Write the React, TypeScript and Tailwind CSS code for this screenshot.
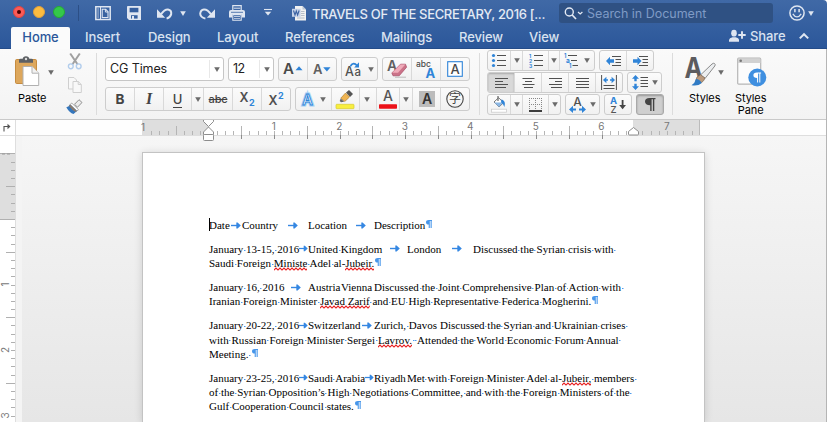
import React, { Fragment, type ReactNode } from "react";

const UI = "font-['Inter','Liberation_Sans',sans-serif]";
const FONT = "Inter, 'Liberation Sans', sans-serif";
const BLUE = "#2f84d8";

function Caret({ className = "", fill = "#6a6a6a" }: { className?: string; fill?: string }) {
  return (
    <svg width="6" height="5" viewBox="0 0 6 5" className={`shrink-0 ${className}`}>
      <path d="M0.2 0.3H5.8L3 4.9Z" fill={fill} />
    </svg>
  );
}

function Group({ className = "", children }: { className?: string; children: ReactNode }) {
  return (
    <div className={`flex shrink-0 overflow-hidden rounded-[3px] border border-[#cdcdcd] bg-linear-to-b from-[#fbfbfb] to-[#f1f1f1] ${className}`}>
      {children}
    </div>
  );
}

function Cell({ className = "", last = false, children }: { className?: string; last?: boolean; children: ReactNode }) {
  return (
    <div className={`flex shrink-0 items-center justify-center ${last ? "" : "border-r border-[#d9d9d9]"} ${className}`}>
      {children}
    </div>
  );
}

function Icon({ w, h, className = "", children }: { w: number; h: number; className?: string; children: ReactNode }) {
  return (
    <svg width={w} height={h} viewBox={`0 0 ${w} ${h}`} fill="none" className={`shrink-0 overflow-visible ${className}`} fontFamily={FONT}>
      {children}
    </svg>
  );
}

/* ---------- Title bar ---------- */

function TitleBar() {
  return (
    <div className="flex h-[27px] items-start">
      <div className="mt-[6px] ml-[13px] flex gap-2">
        <div className="flex size-3 items-center justify-center rounded-full border border-[#e0443e] bg-[#fc5b57]">
          <div className="size-1 rounded-full bg-[#4d0000]" />
        </div>
        <div className="size-3 rounded-full border border-[#e2a13a] bg-[#fdbc40]" />
        <div className="size-3 rounded-full border border-[#27a935] bg-[#34c84a]" />
      </div>
      <div className="mt-[5px] ml-[13px] h-[16px] w-px bg-[#2c4f86]" />
      <Icon w={16} h={15} className="mt-[6px] ml-[16px]">
        <path d="M0.8 0.8H15.2V13.4H0.8Z" stroke="#dfe6f1" strokeWidth="1.5" />
        <path d="M5.5 1V13.5" stroke="#dfe6f1" strokeWidth="1" />
        <path d="M3.1 2.5V12" stroke="#dfe6f1" strokeWidth="1.3" strokeDasharray="1 1" />
        <path d="M7.2 3.3H10.7L13 5.7V11.5H7.2Z" fill="#3a63a0" stroke="#dfe6f1" strokeWidth="1.1" />
        <path d="M10.4 3V6H13.3" stroke="#dfe6f1" strokeWidth="1" />
      </Icon>
      <Icon w={14} h={14} className="mt-[6px] ml-[16px]">
        <path d="M0.8 0H13.2Q14 0 14 0.8V14H2L0 12V0.8Q0 0 0.8 0Z" fill="#dfe6f1" />
        <path d="M2.6 1.8H11.4V6.3H2.6Z" fill="#355f9f" />
        <path d="M4 9.2H10.6V12.6H4Z" fill="#355f9f" />
        <path d="M5 10H7V13H5Z" fill="#dfe6f1" />
      </Icon>
      <Icon w={16} h={13} className="mt-[8px] ml-[16px]">
        <path d="M4 6.2Q7.5 1.2 11 1.4Q14.7 2 14.2 6Q13.6 9.2 9.6 10.6" stroke="#dfe6f1" strokeWidth="2" />
        <path d="M0 1.2V9.8H8.2Z" fill="#dfe6f1" />
      </Icon>
      <Caret className="mt-[11px] ml-[7px]" fill="#dfe6f1" />
      <Icon w={16} h={13} className="mt-[8px] ml-[13px]">
        <path d="M6.4 10.6Q1.4 9.4 1.2 5.8Q1.5 1.8 5 1.4Q8.5 1.2 12 6.2" stroke="#dfe6f1" strokeWidth="2" />
        <path d="M16 1.2V9.8H7.8Z" fill="#dfe6f1" />
      </Icon>
      <Icon w={16} h={16} className="mt-[5px] ml-[14px]">
        <path d="M3.8 5V0.7H12.2V5" stroke="#dfe6f1" strokeWidth="1.2" />
        <path d="M4.8 3.2H11.2" stroke="#dfe6f1" />
        <path d="M2 5H14Q16 5 16 7V12.5H12.8V9.5H3.2V12.5H0V7Q0 5 2 5Z" fill="#dfe6f1" />
        <path d="M2 7.3H14" stroke="#355f9f" strokeWidth="0.8" />
        <path d="M3.8 9.6H12.2V15.3H3.8Z" fill="#355f9f" stroke="#dfe6f1" strokeWidth="1.1" />
        <path d="M5 11.5H11M5 13.4H11" stroke="#dfe6f1" strokeWidth="0.8" />
      </Icon>
      <Icon w={8} h={7} className="mt-[9px] ml-[19px]">
        <path d="M0 0.5H8" stroke="#dfe6f1" strokeWidth="1.1" />
        <path d="M0.8 2.8H7.2L4 6.6Z" fill="#dfe6f1" />
      </Icon>
      <Icon w={15} h={15} className="mt-[6px] ml-[20px]">
        <path d="M3 0H10.5L14 3.5V14.5H3Z" fill="#f2f2f2" />
        <path d="M10.5 0V3.5H14Z" fill="#bcc6d4" />
        <path d="M9 5.5H12.5M9 7.5H12.5M9 9.5H12.5M5 12H12.5" stroke="#9fa9b8" strokeWidth="0.7" />
        <rect y="2.8" width="8.6" height="8" fill="#c5d2e8" />
        <path d="M1.5 4.5L3 9L4.3 5L5.6 9L7.1 4.5" stroke="#3b62a3" strokeWidth="1.1" />
      </Icon>
      <div className="mt-[4px] ml-[5px] w-[247px] text-[13px] leading-[20px] font-medium tracking-[-0.33px] whitespace-nowrap text-[#e4eaf4]">
        TRAVELS OF THE SECRETARY, 2016 [...
      </div>
      <div className="mt-[3px] flex h-[20px] w-[214px] items-center rounded-[3px] bg-[#2f5183]">
        <Icon w={19} h={13} className="ml-[5px]">
          <circle cx="5.3" cy="5" r="4" stroke="#e4eaf4" strokeWidth="1.4" />
          <path d="M8.2 8L12 12" stroke="#e4eaf4" strokeWidth="1.7" />
          <path d="M14 5L16.2 7L18.4 5" stroke="#e4eaf4" strokeWidth="1.2" />
        </Icon>
        <span className="mt-[2px] ml-[4px] text-[12.5px] tracking-[-0.02px] whitespace-nowrap text-[#7f9bc6]">Search in Document</span>
      </div>
      <Icon w={17} h={17} className="mt-[5px] ml-[16px]">
        <circle cx="8" cy="8" r="7.1" stroke="#dfe6f1" strokeWidth="1.5" />
        <path d="M5.9 4V7.2M10.1 4V7.2" stroke="#dfe6f1" strokeWidth="1.5" />
        <path d="M3.8 8.8Q8 15 12.2 8.8" stroke="#dfe6f1" strokeWidth="1.3" />
      </Icon>
      <Caret className="mt-[11px] ml-[2px]" fill="#dfe6f1" />
    </div>
  );
}

const tabs = [
  { name: "Insert", w: "w-[63px]" },
  { name: "Design", w: "w-[69px]" },
  { name: "Layout", w: "w-[68px]" },
  { name: "References", w: "w-[96px]" },
  { name: "Mailings", w: "w-[78px]" },
  { name: "Review", w: "w-[70px]" },
  { name: "View", w: "w-[200px]" },
];

function TabBar() {
  return (
    <div className="flex h-[22px] text-[13px] leading-[21px] font-medium tracking-[-0.1px] text-[#d9e2f0]">
      <div className="mr-[15px] ml-[11px] w-[59px] rounded-t-[2px] bg-[#fbfbfb] text-center text-[#2b579a]">Home</div>
      {tabs.map((t) => (
        <div key={t.name} className={`shrink-0 ${t.w}`}>{t.name}</div>
      ))}
      <Icon w={17} h={12} className="mt-[3px]">
        <ellipse cx="5" cy="3.2" rx="2.8" ry="3.4" fill="#dfe6f1" />
        <path d="M0 11.7V10Q0.3 7.8 3.5 7.2H6.6Q9.8 7.8 10 10V11.7Z" fill="#dfe6f1" />
        <path d="M13 1.3V8.7M9.3 5H16.7" stroke="#dfe6f1" strokeWidth="1.9" />
      </Icon>
      <span className="ml-[4px] w-[49px] leading-[19px]">Share</span>
      <Icon w={10} h={6} className="mt-[6px]">
        <path d="M0.8 5.4L5 1.2L9.2 5.4" stroke="#dfe6f1" strokeWidth="2" />
      </Icon>
    </div>
  );
}

/* ---------- Ribbon ---------- */

function ClipboardSection() {
  return (
    <div className="flex w-[97px] shrink-0 border-r border-[#dcdcdc]">
      <div className="ml-[15px] flex w-[34px] flex-col items-start">
        <Icon w={25} h={31} className="mt-[3px]">
          <rect x="0.5" y="3.5" width="21" height="24" rx="1.2" fill="#dda75c" stroke="#c68c40" />
          <path d="M4 6.8V4Q4 2.8 5.5 2.8H7.7Q8 0.3 11 0.3Q14 0.3 14.3 2.8H16.5Q18 2.8 18 4V6.8Z" fill="#5d6064" />
          <circle cx="11" cy="3" r="1.2" fill="#ddd" />
          <path d="M8 10.5H17L23.7 17.2V29.5H8Z" fill="#fff" stroke="#b1b1b1" />
          <path d="M17 10.5V17.2H23.7" fill="#f2f2f2" stroke="#b1b1b1" />
        </Icon>
        <div className="mt-[5px] ml-[3px] text-[11px] leading-[13px] tracking-[-0.1px] text-black">Paste</div>
      </div>
      <Caret className="mt-[17px] -ml-[1px]" />
      <div className="ml-[12px] flex flex-col items-center">
        <Icon w={16} h={17}>
          <path d="M3.2 0.5L10.7 11.5M12.8 0.5L5.3 11.5" stroke="#a0a0a0" strokeWidth="2" />
          <circle cx="3.8" cy="13.3" r="2.4" stroke="#b2cdec" strokeWidth="1.4" />
          <circle cx="11.7" cy="13.3" r="2.4" stroke="#b2cdec" strokeWidth="1.4" />
        </Icon>
        <Icon w={14} h={17} className="mt-[7px]">
          <path d="M0.5 0.5H6L8.5 3V12H0.5Z" fill="#f8f8f8" stroke="#cfcfcf" />
          <path d="M5 4.5H10.2L13.3 7.5V15.5H5Z" fill="#f8f8f8" stroke="#cfcfcf" />
          <path d="M10.2 4.5V7.5H13.3" stroke="#cfcfcf" />
        </Icon>
        <Icon w={17} h={15} className="mt-[5px]">
          <path d="M13 0.7L16 3.5L11.5 8.2L8.5 5.3Z" fill="#ececec" stroke="#777" strokeWidth="0.8" />
          <path d="M5.7 4L12.5 10.7L10.8 12L4.2 5.5Z" fill="#fff" stroke="#888" strokeWidth="0.7" />
          <path d="M4 5.5L11 12.1L7.5 15Q3.5 14 0.3 8.3Q2.5 8 4 5.5Z" fill="#3476bd" />
          <path d="M4 5.5L10.8 12L9.8 12.9Q6 11.2 3 6.9Z" fill="#8c7b6c" />
        </Icon>
      </div>
    </div>
  );
}

function FontSection() {
  return (
    <div className="flex w-[383px] shrink-0 flex-col border-r border-[#dcdcdc] pt-[4px] pl-[8px]">
      <div className="flex h-[24px] gap-1">
        <div className="flex w-[119px] shrink-0 items-center rounded-[3px] border border-[#c6c6c6] bg-white">
          <span className="ml-[4px] flex-1 text-[12.5px] tracking-[-0.1px] text-[#222]">CG Times</span>
          <div className="flex h-[18px] w-[14px] items-center justify-center border-l border-[#e8e8e8]"><Caret /></div>
        </div>
        <div className="flex w-[46px] shrink-0 items-center rounded-[3px] border border-[#c6c6c6] bg-white">
          <span className="ml-[4px] flex-1 text-[12.5px] tracking-[-0.5px] text-[#222]">12</span>
          <div className="flex h-[18px] w-[14px] items-center justify-center border-l border-[#e8e8e8]"><Caret /></div>
        </div>
        <Group className="w-[59px]">
          <Cell className="w-[29px]">
            <Icon w={20} h={14}>
              <text x="0" y="12.2" fontSize="15" fontWeight="600" fill="#4a4a4a">A</text>
              <path d="M12.5 8.3L16 4.2L19.5 8.3Z" fill={BLUE} />
            </Icon>
          </Cell>
          <Cell className="w-[28px]" last>
            <Icon w={18} h={14}>
              <text x="0" y="12.2" fontSize="13" fontWeight="600" fill="#606060">A</text>
              <path d="M10.2 5.2H17.5L13.9 9.5Z" fill={BLUE} />
            </Icon>
          </Cell>
        </Group>
        <Group className="w-[37px]">
          <Cell className="w-[35px] gap-[6px]" last>
            <Icon w={17} h={15}>
              <text x="0" y="13.7" fontSize="12.5" fontWeight="500" fill="#505050">A</text>
              <text x="9.5" y="13.7" fontSize="11.5" fontWeight="500" fill="#505050">a</text>
              <path d="M5.5 4Q8.5 -0.6 12 3.5" stroke={BLUE} strokeWidth="1.8" />
              <path d="M14 0.3V5.5H9.2Z" fill={BLUE} />
            </Icon>
            <Caret />
          </Cell>
        </Group>
        <Group className="w-[88px]">
          <Cell className="w-[29px]">
            <Icon w={20} h={19}>
              <text x="0" y="11" fontSize="14" fontWeight="600" fill="#606060">A</text>
              <path d="M13.5 4.2H18.5L19.6 7.2L12.2 15.8H6L4.8 13Z" fill="#cb7288" stroke="#a64b65" strokeWidth="0.7" />
              <path d="M13.5 4.4H18.3L11 12.8H5.2Z" fill="#efabb9" />
              <path d="M8 17.2H19" stroke="#bbb" />
            </Icon>
          </Cell>
          <Cell className="w-[29px]">
            <Icon w={20} h={20}>
              <text x="0" y="8.2" fontSize="8.5" fontWeight="500" fill="#4c4c4c">abc</text>
              <text x="9.4" y="19" fontSize="13" fontWeight="700" fill={BLUE}>A</text>
            </Icon>
          </Cell>
          <Cell className="w-[28px]" last>
            <Icon w={16} h={16}>
              <rect x="0.7" y="0.7" width="14.6" height="14.6" fill="#fff" stroke={BLUE} strokeWidth="1.1" />
              <text x="8" y="12.8" fontSize="13" fontWeight="500" fill="#484848" textAnchor="middle">A</text>
            </Icon>
          </Cell>
        </Group>
      </div>
      <div className="mt-[6px] flex h-[24px] gap-1">
        <Group className="w-[186px]">
          <Cell className="w-[29px]"><span className="text-[13.5px] font-bold text-[#444]">B</span></Cell>
          <Cell className="w-[29px]"><span className="font-['Liberation_Serif',serif] text-[16px] font-bold text-[#444] italic">I</span></Cell>
          <Cell className="w-[28px]">
            <span className="h-[17px] border-b border-[#444] text-[13px] leading-[17px] font-medium text-[#444]">U</span>
          </Cell>
          <Cell className="w-[12px]"><Caret /></Cell>
          <Cell className="w-[29px]"><span className="text-[11px] tracking-[-0.2px] font-medium text-[#444] line-through">abc</span></Cell>
          <Cell className="w-[29px]">
            <Icon w={16} h={16}>
              <text x="0.5" y="11" fontSize="12.5" fontWeight="600" fill="#505050">X</text>
              <text x="10" y="15" fontSize="9" fontWeight="700" fill={BLUE}>2</text>
            </Icon>
          </Cell>
          <Cell className="w-[28px]" last>
            <Icon w={16} h={16}>
              <text x="0.5" y="13.5" fontSize="12.5" fontWeight="600" fill="#505050">X</text>
              <text x="10" y="8.2" fontSize="9" fontWeight="700" fill={BLUE}>2</text>
            </Icon>
          </Cell>
        </Group>
        <Group className="w-[175px]">
          <Cell className="w-[36px] gap-[6px]">
            <Icon w={13} h={17}>
              <text x="6.5" y="13.7" fontSize="14.5" fontWeight="600" fill="#fff" stroke="#a6d0f5" strokeWidth="3" textAnchor="middle">A</text>
              <text x="6.5" y="13.7" fontSize="14.5" fontWeight="600" fill="#fff" stroke={BLUE} strokeWidth="0.9" textAnchor="middle">A</text>
            </Icon>
            <Caret />
          </Cell>
          <Cell className="w-[28px]">
            <Icon w={18} h={19} className="mr-[2px]">
              <path d="M10 2.5L13 0L17 4L14 7Z" fill="#555" />
              <path d="M9.5 3L13.5 7L8.8 11.5L4.8 8.2Z" fill="#efb452" stroke="#a47322" strokeWidth="0.6" />
              <path d="M4.7 8.5L8.2 11.8L5 12.2L3.7 11Z" fill="#666" />
              <rect x="0" y="14.3" width="18" height="4.4" rx="0.7" fill="#f8ee3e" stroke="#d5ca32" strokeWidth="0.7" />
            </Icon>
          </Cell>
          <Cell className="w-[17px] pr-[3px]"><Caret /></Cell>
          <Cell className="w-[23px]">
            <Icon w={18} h={19}>
              <text x="9" y="11.3" fontSize="14" fontWeight="500" fill="#555" textAnchor="middle">A</text>
              <rect y="14.3" width="18" height="4.5" rx="0.7" fill="#ec1118" />
            </Icon>
          </Cell>
          <Cell className="w-[13px]"><Caret /></Cell>
          <Cell className="w-[28px]">
            <Icon w={16} h={16}>
              <rect width="16" height="16" fill="#bcbcbc" />
              <text x="8" y="13" fontSize="14" fontWeight="600" fill="#333" textAnchor="middle">A</text>
            </Icon>
          </Cell>
          <Cell className="w-[28px]" last>
            <Icon w={18} h={18}>
              <circle cx="9" cy="9" r="8.2" stroke="#444" strokeWidth="1.1" />
              <text x="9" y="13.4" fontSize="12" fill="#444" textAnchor="middle" fontFamily="'Noto Sans CJK TC', sans-serif">字</text>
            </Icon>
          </Cell>
        </Group>
      </div>
    </div>
  );
}

function AlignLines({ rows }: { rows: [number, number][] }) {
  return (
    <Icon w={13} h={12}>
      {rows.map(([a, b], i) => (
        <path key={i} d={`M${a} ${i * 3 + 1.5}H${b}`} stroke="#505050" />
      ))}
    </Icon>
  );
}

function Indent({ flip = false }: { flip?: boolean }) {
  return (
    <Icon w={15} h={12}>
      <path d={flip ? "M8.5 6L4.5 1.8V4.3H0V7.7H4.5V10.2Z" : "M0 6L4 1.8V4.3H8V7.7H4V10.2Z"} fill={BLUE} />
      <path d="M6 1.5H15M9.5 4.5H15M9.5 7.5H15M6 10.5H15" stroke="#505050" />
    </Icon>
  );
}

function ParagraphSection() {
  return (
    <div className="flex w-[193px] shrink-0 flex-col gap-[1px] border-r border-[#dcdcdc] pl-[7px]">
      <div className="-mt-[3px] flex h-[22px] gap-1">
        <Group className="w-[108px]">
          <Cell className="w-[23px]">
            <Icon w={14} h={13}>
              {[1.5, 6.5, 11.5].map((y) => (
                <Fragment key={y}>
                  <circle cx="1.5" cy={y} r="1.6" fill={BLUE} />
                  <path d={`M5 ${y}H14`} stroke="#505050" />
                </Fragment>
              ))}
            </Icon>
          </Cell>
          <Cell className="w-[12px]"><Caret /></Cell>
          <Cell className="w-[26px]">
            <Icon w={14} h={14}>
              {[2, 7, 12].map((y, i) => (
                <Fragment key={y}>
                  <text x="0" y={y + 1.8} fontSize="5" fontWeight="700" fill={BLUE}>{i + 1}</text>
                  <path d={`M5 ${y - 0.5}H14`} stroke="#505050" />
                </Fragment>
              ))}
            </Icon>
          </Cell>
          <Cell className="w-[11px]"><Caret /></Cell>
          <Cell className="w-[34px] gap-[5px]" last>
            <Icon w={15} h={14}>
              <text x="0" y="4" fontSize="5.5" fontWeight="700" fill={BLUE}>1</text>
              <text x="2" y="9.3" fontSize="6.5" fontWeight="700" fill={BLUE}>a</text>
              <text x="5" y="14" fontSize="5.5" fontWeight="700" fill={BLUE}>1</text>
              <path d="M4 1.5H13M7 6.5H13M8.5 11.5H14" stroke="#505050" />
            </Icon>
            <Caret />
          </Cell>
        </Group>
        <Group className="w-[55px]">
          <Cell className="w-[27px]"><Indent /></Cell>
          <Cell className="w-[26px]" last><Indent flip /></Cell>
        </Group>
      </div>
      <div className="flex h-[22px] gap-1">
        <Group className="w-[136px]">
          <Cell className="w-[27px] bg-[#d8d8d8] shadow-[inset_0_1px_2px_#aaa]"><AlignLines rows={[[0, 13], [0, 8], [0, 13], [0, 11]]} /></Cell>
          <Cell className="w-[27px]"><AlignLines rows={[[0.5, 12.5], [3, 10], [0.5, 12.5], [2, 11]]} /></Cell>
          <Cell className="w-[27px]"><AlignLines rows={[[0, 13], [6, 13], [0, 13], [2, 13]]} /></Cell>
          <Cell className="w-[27px]"><AlignLines rows={[[0, 13], [0, 13], [0, 13], [0, 13]]} /></Cell>
          <Cell className="w-[26px]" last>
            <Icon w={16} h={15}>
              <path d="M0.6 0V15M15.4 0V15" stroke="#505050" />
              <path d="M2 5L5.4 1.7V4.2H7V5.8H5.4V8.3ZM14 5L10.6 1.7V4.2H9V5.8H10.6V8.3Z" fill={BLUE} />
              <path d="M2.5 10.5H13.5M2.5 13.5H13.5" stroke="#505050" />
            </Icon>
          </Cell>
        </Group>
        <Group className="w-[35px]">
          <Cell className="w-[33px] gap-[4px]" last>
            <Icon w={16} h={15}>
              <path d="M3.5 0L7 3.7H4.7V6.3H2.3V3.7H0ZM3.5 15L7 11.3H4.7V8.7H2.3V11.3H0Z" fill={BLUE} />
              <path d="M8.5 2.5H16M8.5 5.5H16M8.5 8.5H16M8.5 11.5H16" stroke="#505050" />
            </Icon>
            <Caret />
          </Cell>
        </Group>
      </div>
      <div className="flex h-[22px] gap-1">
        <Group className="w-[74px]">
          <Cell className="w-[23px]">
            <Icon w={16} h={17}>
              <path d="M3 6L7.6 1.7L12.5 6.7L8 11Z" fill="#fff" stroke="#777" />
              <path d="M7 0V5" stroke="#666" strokeWidth="1.2" />
              <path d="M3.2 6.5L12 6.6L8 11Z" fill="#8cb8e5" />
              <path d="M10.5 3.2Q15.3 5 13.4 11Q12.4 7.8 10 6.3Z" fill={BLUE} />
              <rect x="0.4" y="13.2" width="15" height="3" fill="#fff" stroke="#ccc" strokeWidth="0.8" />
            </Icon>
          </Cell>
          <Cell className="w-[12px]"><Caret /></Cell>
          <Cell className="w-[26px]">
            <Icon w={13} h={14}>
              <path d="M0 0.5H13M0 6.5H13" stroke="#888" strokeDasharray="1 1" />
              <path d="M0.5 0V12M6.5 0V12M12.5 0V12" stroke="#888" strokeDasharray="1 1" />
              <path d="M0 13H13" stroke="#000" strokeWidth="1.4" />
            </Icon>
          </Cell>
          <Cell className="w-[11px]" last><Caret /></Cell>
        </Group>
        <Group className="w-[35px]">
          <Cell className="w-[33px] gap-[4px]" last>
            <Icon w={17} h={17}>
              <text x="8.5" y="9.8" fontSize="12" fontWeight="500" fill="#505050" textAnchor="middle">A</text>
              <path d="M0 13.4L4 9.8V12.4H7V14.4H4V17ZM17 13.4L13 9.8V12.4H10V14.4H13V17Z" fill={BLUE} />
            </Icon>
            <Caret />
          </Cell>
        </Group>
        <Group className="w-[28px]">
          <Cell className="w-[26px]" last>
            <Icon w={16} h={17}>
              <text x="0" y="7.6" fontSize="9.5" fontWeight="700" fill={BLUE}>A</text>
              <text x="0.5" y="16.6" fontSize="9.5" fontWeight="500" fill="#555">Z</text>
              <path d="M12.6 4V10" stroke="#444" strokeWidth="1.8" />
              <path d="M9.2 9H16L12.6 13.3Z" fill="#444" />
            </Icon>
          </Cell>
        </Group>
        <div className="flex w-[28px] shrink-0 items-center justify-center rounded-[3px] border border-[#a9a9a9] bg-[#cfcfcf] shadow-[inset_0_1px_2px_#999]">
          <Icon w={10} h={13}>
            <path d="M4.5 0H10.5V1.3H9.3V13H7.9V1.3H6.6V13H5.2V7.2Q0 7.2 0 3.6Q0 0 4.5 0Z" fill="#444" />
          </Icon>
        </div>
      </div>
    </div>
  );
}

function StylesSection() {
  return (
    <div className="flex text-[11px] leading-[12px] tracking-[-0.1px] text-black">
      <div className="ml-[12px] flex w-[33px] flex-col">
        <Icon w={32} h={30} className="mt-[4px]">
          <text x="-0.5" y="20.6" fontSize="28" fontWeight="700" fill="#5c5c5f" textLength="18" lengthAdjust="spacingAndGlyphs">A</text>
          <path d="M29.5 6.5Q30.8 7.5 29.8 9L20 21.5L15.5 18L27 7Q28.5 5.8 29.5 6.5Z" fill="#eceef0" stroke="#8b8b8b" strokeWidth="1" />
          <path d="M20 21L15.6 17.7L12 20Q10 24 11 26.5Q18 27 20 21Z" fill="#ba997c" stroke="#776555" strokeWidth="0.7" />
          <path d="M11 22Q14.5 22.2 16.8 26Q13 29.5 6.5 28.3Q10 26 11 22Z" fill="#307bc5" />
        </Icon>
        <div className="mt-[5px] ml-[4px]">Styles</div>
      </div>
      <Caret className="mt-[17px]" />
      <div className="ml-[11px] flex flex-col items-center">
        <Icon w={30} h={30} className="mt-[5px]">
          <rect x="1.7" y="0.2" width="23" height="26" rx="1" fill="#fcfcfc" stroke="#b5b5b5" strokeWidth="1.2" />
          <path d="M2 0.5H24.5V5H2Z" fill="#d2d2d2" />
          <circle cx="4.7" cy="2.7" r="1.3" fill="#777" />
          <circle cx="21.3" cy="19.5" r="9" fill="#3f8fe0" />
          <path d="M21 14.5H25.1V15.5H24.3V24.5H23.3V15.5H22.1V24.5H21.1V19.9Q17.4 19.9 17.4 17.2Q17.4 14.5 21 14.5Z" fill="#fff" />
        </Icon>
        <div className="mt-[4px] text-center">Styles<br />Pane</div>
      </div>
    </div>
  );
}

/* ---------- Rulers ---------- */

const INCH = 65.5;

function HorizontalRuler() {
  const ticks: ReactNode[] = [];
  for (let i = -7; i < 60; i++) {
    const x = Math.round(208.5 + (i * INCH) / 8) + 0.5;
    if (i === 0 || i === 52) continue;
    const half = i % 8 === 4 || i % 8 === -4;
    ticks.push(<path key={i} d={`M${x} ${half ? 6 : 11}V15`} stroke="#b5b5b5" />);
    if (i > 0 && i < 52 && i % 4 === 0) ticks.push(<path key={`t${i}`} d={`M${x} 15V19`} stroke="#8c8c8c" />);
  }
  return (
    <div className="relative flex h-[16px] shrink-0 border-b border-[#dedede] bg-[#fefefe]">
      <div className="h-[15px] w-[16px] border-r border-[#dedede] bg-white">
        <Icon w={8} h={9} className="mt-[3px] ml-[3px]">
          <path d="M1 8.5V3.5H6" stroke="#555" strokeWidth="1.1" />
          <path d="M4.5 0.8L7.5 3.5L4.5 6.2Z" fill="#555" />
        </Icon>
      </div>
      <div className="ml-[126px] h-[15px] w-[67px] bg-[#dedede]" />
      <div className="w-[424px] bg-white" />
      <div className="h-[15px] w-[67px] border-r border-[#bbb] bg-[#dedede]" />
      <svg width="826" height="24" className="absolute top-0 left-0 z-10" fontSize="10" fontFamily={FONT} fill="none">
        {ticks}
        {[1, 2, 3, 4, 5, 6, 7].map((n) => (
          <text key={n} x={208.3 + n * INCH} y="9.5" textAnchor="middle" fill="#777">{n}</text>
        ))}
        <text x="141" y="10.5" fill="#777">1</text>
        <path d="M203.5 0V1.5L208.5 6.5L213.5 1.5V0" fill="#fff" stroke="#8d8d8d" />
        <path d="M208.5 7L213.5 12V14.5H203.5V12Z" fill="#fff" stroke="#8d8d8d" />
        <rect x="203.5" y="14.5" width="10" height="6" rx="1" fill="#fff" stroke="#8d8d8d" />
        <path d="M633.5 7.5L638.5 11.5V14Q638.5 15 637.5 15H629.5Q628.5 15 628.5 14V11.5Z" fill="#fff" stroke="#8d8d8d" />
      </svg>
    </div>
  );
}

function VerticalRuler() {
  const ticks: ReactNode[] = [];
  for (let i = -7; i < 26; i++) {
    const y = Math.round(83 + (i * INCH) / 8) + 0.5;
    const half = i % 8 === 4 || i % 8 === -4;
    if (i === 0) continue;
    ticks.push(<path key={i} d={`M${half ? 6 : 11} ${y}H15`} stroke="#b0b0b0" />);
  }
  return (
    <div className="flex h-full w-[16px] shrink-0 flex-col border-r border-[#dedede] bg-white">
      <svg width="15" height="286" fontSize="10" fontFamily={FONT} fill="none">
        <rect y="17" width="15" height="66" fill="#dedede" />
        <path d="M0 17.5H15M0 83.5H15" stroke="#b0b0b0" />
        <path d="M2 18H10" stroke="#999" strokeDasharray="3 2" />
        {ticks}
        {[1, 2, 3].map((n) => (
          <text key={n} transform={`translate(9.3 ${83 + n * INCH}) rotate(-90)`} textAnchor="middle" fill="#777">{n}</text>
        ))}
      </svg>
    </div>
  );
}

/* ---------- Document ---------- */

function Words({ text }: { text: string }) {
  return (
    <>
      {text.split(" ").map((word, i) => (
        <Fragment key={i}>
          {i > 0 && (
            <span className="bg-[linear-gradient(#4d9bec,#4d9bec)] bg-[length:1.5px_1px] bg-[position:50%_62%] bg-no-repeat"> </span>
          )}
          {word}
        </Fragment>
      ))}
    </>
  );
}

function Misspelled({ id, children }: { id: string; children: string }) {
  return (
    <span className="relative">
      {children}
      <svg className="absolute bottom-[-2px] left-0 h-[4px] w-full">
        <defs>
          <pattern id={id} width="4" height="4" patternUnits="userSpaceOnUse">
            <path d="M-1 4L2 1L5 4" stroke="#e81c1c" strokeWidth="1.1" fill="none" />
          </pattern>
        </defs>
        <rect width="100%" height="4" fill={`url(#${id})`} />
      </svg>
    </span>
  );
}

function Pilcrow() {
  return (
    <svg width="6" height="8" viewBox="0 0 6 8" className="mt-[2px] ml-[1px] shrink-0">
      <path d="M2.8 0H6V1H5.7V8H4.6V1H3.8V8H2.7V4.5Q0 4.5 0 2.2Q0 0 2.8 0Z" fill="#4796ea" />
    </svg>
  );
}

/* A run of text that ends at a tab stop, with the tab arrow centred in what is left over. */
function Tab({ w, arrow = true, children }: { w: string; arrow?: boolean; children: ReactNode }) {
  return (
    <span className={`flex shrink-0 ${w}`}>
      <span>{children}</span>
      {arrow && (
        <span className="flex min-w-[8px] flex-1 items-center justify-center">
          <svg width="10" height="7" viewBox="0 0 10 7" className="shrink">
            <path d="M0 3.5H6" stroke="#3587e2" strokeWidth="1.4" />
            <path d="M5.3 0.5H6.6L9.8 3.5L6.6 6.5H5.3Z" fill="#3587e2" />
          </svg>
        </span>
      )}
    </span>
  );
}

function Line({ className = "", children }: { className?: string; children: ReactNode }) {
  return <div className={`flex h-[14.4px] whitespace-pre ${className}`}>{children}</div>;
}

function Page() {
  return (
    <div className="ml-[120px] flex w-[563px] shrink-0 flex-col gap-[9.4px] border border-b-0 border-[#c3c3c3] bg-white pt-[65px] pl-[66px] font-['Liberation_Serif',serif] text-[11px] leading-[14.4px] text-black shadow-[0_1px_8px_rgba(0,0,0,0.14)]">
      <div>
        <Line>
          <span className="-mr-px h-[13px] w-px shrink-0 bg-black" />
          <Tab w="w-[33px]">Date</Tab>
          <Tab w="w-[66px]">Country</Tab>
          <Tab w="w-[66px]">Location</Tab>
          <span>Description</span><Pilcrow />
        </Line>
      </div>
      <div>
        <Line>
          <Tab w="w-[99px]"><Words text="January 13-15, 2016" /></Tab>
          <Tab w="w-[99px]"><Words text="United Kingdom" /></Tab>
          <Tab w="w-[66px]">London</Tab>
          <span><Words text="Discussed the Syrian crisis with " /></span>
        </Line>
        <Line>
          <span><Words text="Saudi Foreign " /><Misspelled id="m1">Ministe</Misspelled><Words text=" Adel al-" /><Misspelled id="m2">Jubeir.</Misspelled></span><Pilcrow />
        </Line>
      </div>
      <div>
        <Line>
          <Tab w="w-[99px]"><Words text="January 16, 2016" /></Tab>
          <Tab w="w-[33px]" arrow={false}>Austria</Tab>
          <Tab w="w-[33px]" arrow={false}>Vienna</Tab>
          <span className="tracking-[0.03px]"><Words text="Discussed the Joint Comprehensive Plan of Action with " /></span>
        </Line>
        <Line>
          <span><Words text="Iranian Foreign Minister " /><Misspelled id="m3">Javad Zarif</Misspelled><Words text=" and EU High Representative Federica Mogherini." /></span><Pilcrow />
        </Line>
      </div>
      <div>
        <Line>
          <Tab w="w-[99px]"><Words text="January 20-22, 2016" /></Tab>
          <Tab w="w-[66px]">Switzerland</Tab>
          <Tab w="w-[66px]" arrow={false}><Words text="Zurich, Davos" /></Tab>
          <span><Words text="Discussed the Syrian and Ukrainian crises " /></span>
        </Line>
        <Line className="tracking-[0.035px]">
          <span><Words text="with Russian Foreign Minister Sergei " /><Misspelled id="m4">Lavrov.</Misspelled><Words text="  Attended the World Economic Forum Annual " /></span>
        </Line>
        <Line><span><Words text="Meeting. " /></span><Pilcrow /></Line>
      </div>
      <div>
        <Line>
          <Tab w="w-[99px]"><Words text="January 23-25, 2016" /></Tab>
          <Tab w="w-[66px]"><Words text="Saudi Arabia" /></Tab>
          <Tab w="w-[33px]" arrow={false}>Riyadh</Tab>
          <span><Words text="Met with Foreign Minister Adel al-" /><Misspelled id="m5">Jubeir,</Misspelled><Words text=" members " /></span>
        </Line>
        <Line><span><Words text="of the Syrian Opposition’s High Negotiations Committee, and with the Foreign Ministers of the " /></span></Line>
        <Line><span><Words text="Gulf Cooperation Council states." /></span><Pilcrow /></Line>
      </div>
    </div>
  );
}

export default function App() {
  return (
    <div className={`flex h-[422px] w-[827px] flex-col overflow-hidden bg-white ${UI}`}>
      <div className="h-[49px] shrink-0 rounded-tr-[4px] border-b border-[#244c89] bg-linear-to-b from-[#4069a6] to-[#2b579a]">
        <TitleBar />
        <TabBar />
      </div>
      <div className="flex min-h-0 flex-1 flex-col border-r border-[#b5b5b5]">
        <div className="h-[71px] shrink-0 border-b border-[#c9c9c9] bg-linear-to-b from-[#fafafa] to-[#f3f3f3] pt-[4px]">
          <div className="flex h-[62px]">
            <ClipboardSection />
            <FontSection />
            <ParagraphSection />
            <StylesSection />
          </div>
        </div>
        <HorizontalRuler />
        <div className="flex min-h-0 flex-1">
          <VerticalRuler />
          <div className="w-[6px] bg-[#f4f4f4]" />
          <div className="flex flex-1 bg-linear-to-b from-[#f6f6f6] to-[#e6e6e6] pt-[16px]">
            <Page />
          </div>
        </div>
      </div>
    </div>
  );
}
